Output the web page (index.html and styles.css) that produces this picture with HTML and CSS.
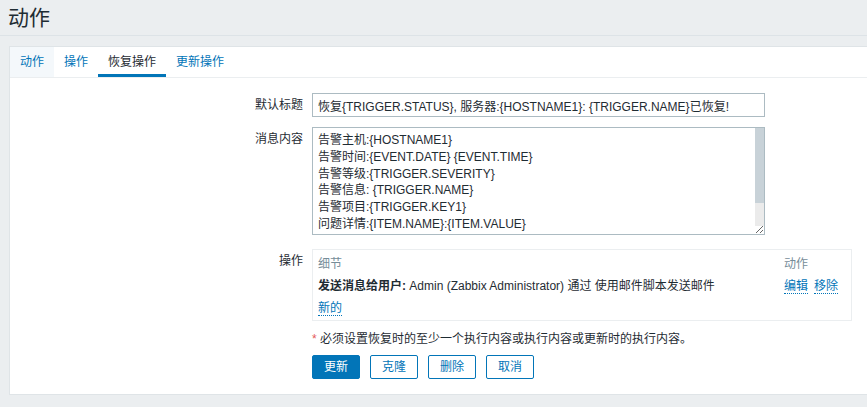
FILE: index.html
```html
<!DOCTYPE html>
<html lang="zh-CN">
<head>
<meta charset="utf-8">
<title>动作</title>
<link rel="stylesheet" href="styles.css">
</head>
<body>
<header class="page-header"><h1 class="page-title">动作</h1></header>
<main class="content">
  <div class="card">
    <ul class="tabs">
      <li class="tab tab-hover"><a href="#">动作</a></li>
      <li class="tab"><a href="#">操作</a></li>
      <li class="tab tab-active"><a href="#">恢复操作</a></li>
      <li class="tab"><a href="#">更新操作</a></li>
    </ul>
    <div class="form">
      <div class="form-row">
        <label class="form-label">默认标题</label>
        <div class="form-field"><input class="text-input" type="text" value="恢复{TRIGGER.STATUS}, 服务器:{HOSTNAME1}: {TRIGGER.NAME}已恢复!"></div>
      </div>
      <div class="form-row row-textarea">
        <label class="form-label">消息内容</label>
        <div class="form-field">
          <div class="textarea-wrap">
            <textarea class="text-area">告警主机:{HOSTNAME1}
告警时间:{EVENT.DATE} {EVENT.TIME}
告警等级:{TRIGGER.SEVERITY}
告警信息: {TRIGGER.NAME}
告警项目:{TRIGGER.KEY1}
问题详情:{ITEM.NAME}:{ITEM.VALUE}
当前状态:{TRIGGER.STATUS}:{ITEM.VALUE1}
事件ID:{EVENT.ID}</textarea>
            <div class="fake-scroll"><div class="fake-thumb"></div></div>
          </div>
        </div>
      </div>
      <div class="form-row row-ops">
        <label class="form-label">操作</label>
        <div class="form-field">
          <div class="ops-box">
            <table class="ops-table">
              <thead>
                <tr><th class="col-detail">细节</th><th class="col-action">动作</th></tr>
              </thead>
              <tbody>
                <tr>
                  <td class="col-detail"><b>发送消息给用户:</b> Admin (Zabbix Administrator) 通过 使用邮件脚本发送邮件</td>
                  <td class="col-action"><a class="link-dotted" href="#">编辑</a><a class="link-dotted link-gap" href="#">移除</a></td>
                </tr>
                <tr>
                  <td class="col-detail"><a class="link-dotted" href="#">新的</a></td>
                  <td class="col-action"></td>
                </tr>
              </tbody>
            </table>
          </div>
        </div>
      </div>
      <div class="form-row row-note">
        <div class="form-label"></div>
        <div class="form-field note"><span class="asterisk">*</span> 必须设置恢复时的至少一个执行内容或执行内容或更新时的执行内容。</div>
      </div>
      <div class="form-row row-buttons">
        <div class="form-label"></div>
        <div class="form-field buttons">
          <button class="btn btn-primary" type="button">更新</button>
          <button class="btn btn-alt" type="button">克隆</button>
          <button class="btn btn-alt" type="button">删除</button>
          <button class="btn btn-alt" type="button">取消</button>
        </div>
      </div>
    </div>
  </div>
</main>
</body>
</html>
```

FILE: styles.css
```css
html {
  overflow: hidden;
}
body {
  margin: 0;
  background: #ebeef0;
  color: #1f2c33;
  font-family: Arial, "Liberation Sans", "Noto Sans CJK SC", sans-serif;
  font-size: 12px;
}
.page-header {
  height: 35px;
  border-bottom: 1px solid #dde3e7;
  padding: 0 8px;
}
.page-title {
  margin: 0;
  font-size: 21px;
  font-weight: normal;
  line-height: 36px;
  color: #1f2c33;
}
.content {
  padding: 10px 0 0 9px;
}
.card {
  background: #fff;
  border: 1px solid #dfe4e7;
  margin-right: -20px;
  padding-bottom: 15px;
}
.tabs {
  list-style: none;
  margin: 0;
  padding: 0;
  display: flex;
  border-bottom: 1px solid #ebeef0;
}
.tab a {
  display: block;
  height: 30px;
  line-height: 30px;
  padding: 0 10px;
  color: #0275b8;
  text-decoration: none;
}
.tab-hover a {
  background: #f4f8fb;
}
.tab-active a {
  color: #1f2c33;
  box-shadow: inset 0 -3px 0 #0275b8;
}
.form {
  padding-top: 15px;
}
.form-row {
  display: grid;
  grid-template-columns: 293px 1fr;
  column-gap: 9px;
  margin-bottom: 10px;
}
.form-label {
  text-align: right;
  line-height: 24px;
}
.row-textarea {
  margin-bottom: 14px;
}
.row-ops {
  margin-bottom: 11px;
}
.row-note {
  margin-bottom: 9px;
}
.row-buttons {
  margin-bottom: 0;
}
.text-input {
  box-sizing: border-box;
  width: 453px;
  height: 24px;
  border: 1px solid #acbbc2;
  padding: 0 5px;
  margin: 0;
  font: inherit;
  color: #1f2c33;
  display: block;
  outline: none;
}
.textarea-wrap {
  position: relative;
  width: 453px;
  height: 108px;
}
.text-area {
  box-sizing: border-box;
  display: block;
  width: 453px;
  height: 108px;
  border: 1px solid #acbbc2;
  padding: 4px 14px 4px 5px;
  margin: 0;
  font: inherit;
  line-height: 1.4;
  color: #1f2c33;
  overflow: hidden;
  resize: both;
  outline: none;
}
.fake-scroll {
  position: absolute;
  top: 1px;
  right: 1px;
  width: 9px;
  height: 98px;
  background: #ebebeb;
}
.fake-thumb {
  height: 75px;
  background: #c8d2d8;
}
.ops-box {
  box-sizing: border-box;
  width: 540px;
  border: 1px solid #ebeef0;
  padding: 1px 0 3px;
}
.ops-table {
  width: 100%;
  border-collapse: collapse;
}
.ops-table th,
.ops-table td {
  height: 22px;
  padding: 0 5px;
  text-align: left;
  vertical-align: middle;
  white-space: nowrap;
}
.ops-table th {
  font-weight: normal;
  color: #768d99;
}
.ops-table .col-action {
  width: 62px;
}
.link-dotted {
  color: #0275b8;
  text-decoration: none;
  border-bottom: 1px dotted #0275b8;
}
.link-gap {
  margin-left: 6px;
}
.note {
  line-height: 14px;
}
.asterisk {
  color: #e45959;
}
.buttons {
  display: flex;
  gap: 10px;
}
.btn {
  box-sizing: border-box;
  height: 24px;
  padding: 0 11px;
  border: 1px solid #0275b8;
  border-radius: 2px;
  font: inherit;
  line-height: 22px;
  cursor: pointer;
}
.btn-primary {
  background: #0275b8;
  color: #fff;
}
.btn-alt {
  background: #fff;
  color: #0275b8;
}
```
